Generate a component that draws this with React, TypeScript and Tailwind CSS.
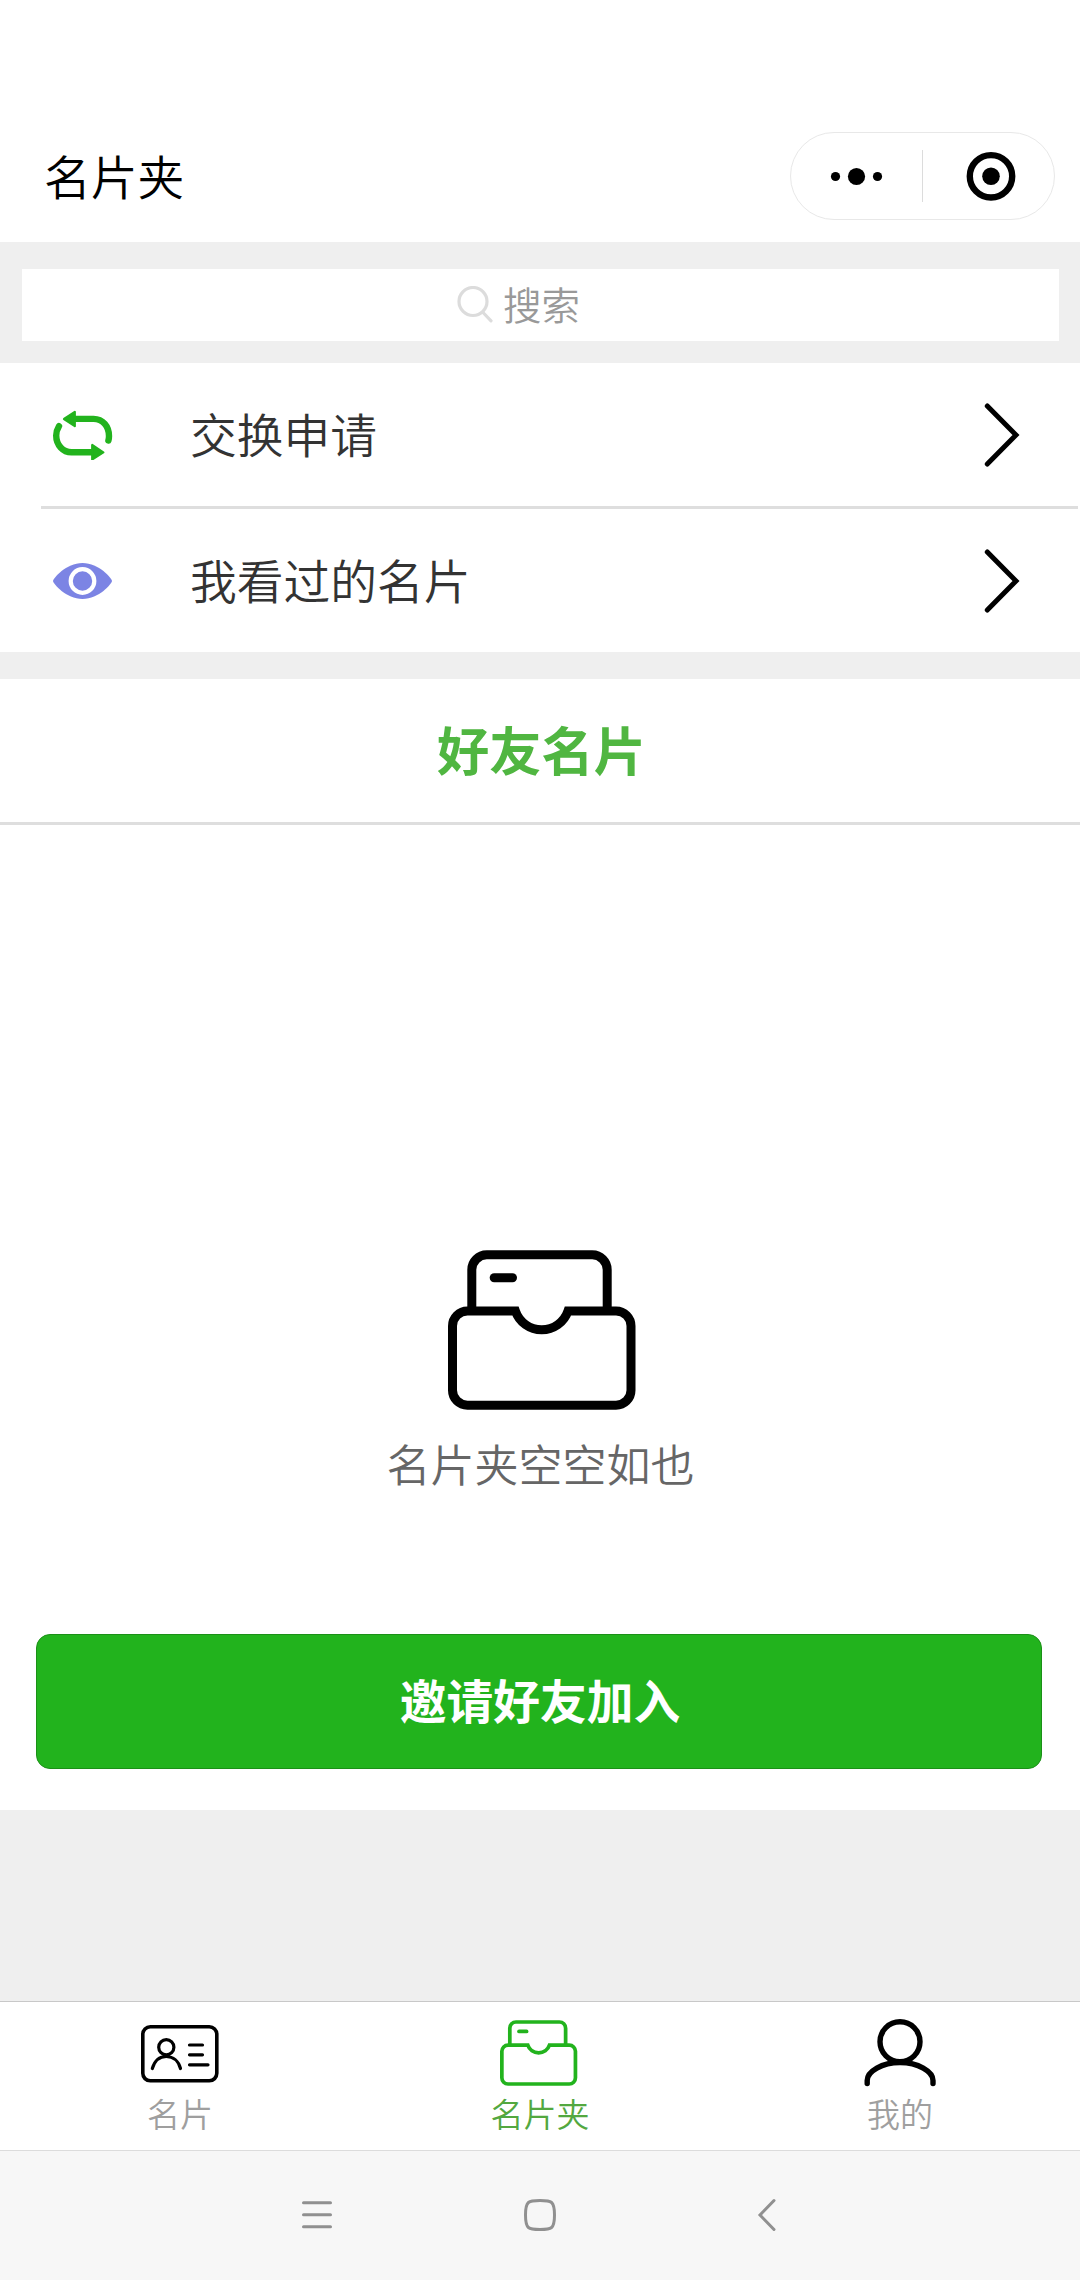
import type { ReactNode } from "react";

function FolderIcon({ className }: { className: string }) {
  return (
    <svg className={className} viewBox="0 0 188 160" fill="none" stroke="currentColor" strokeWidth="9">
      <path d="M23.8 61V19.8a15 15 0 0 1 15-15h105.4a15 15 0 0 1 15 15V61" />
      <path d="M67.4 61H19.5a15 15 0 0 0-15 15v64.2a15 15 0 0 0 15 15H168a15 15 0 0 0 15-15V76a15 15 0 0 0-15-15h-48a27.8 27.8 0 0 1-52.6 0Z" />
      <path d="M46.2 27.7h18.3" strokeLinecap="round" />
    </svg>
  );
}

function SwapIcon() {
  return (
    <svg className="h-[50px] w-[60px]" viewBox="0 0 60 50" fill="none" stroke="#22b31d" strokeWidth="6.4" strokeLinecap="round">
      <path d="M21 8.9H40.5C50 8.9 56 16.5 56 26c0 2-.2 3.200-.6 4.500" />
      <path d="M6 16.200C4.300 19 3.200 22 3.200 25.500C3.200 35 10 42.300 18.500 42.300H39" />
      <path d="M11 9L21.800 1.800V16.200Z" fill="#22b31d" strokeWidth="2.200" strokeLinejoin="round" />
      <path d="M50.300 42.300L39.200 35V49.500Z" fill="#22b31d" strokeWidth="2.200" strokeLinejoin="round" />
    </svg>
  );
}

function EyeIcon() {
  return (
    <svg className="h-[36px] w-[60px]" viewBox="0 0 60 36">
      <path d="M0 18C0 15.500 13 0 29.500 0S59 15.500 59 18S46 36 29.500 36S0 20.500 0 18Z" fill="#7c84e4" />
      <circle cx="29.500" cy="18" r="11.800" fill="none" stroke="#fff" strokeWidth="4.200" />
    </svg>
  );
}

function Row({ icon, label }: { icon: ReactNode; label: string }) {
  return (
    <div className="flex h-[143px] items-center pl-[53px] pr-[60px]">
      <div className="w-[137px]">{icon}</div>
      <span className="flex-1 pb-[4px] text-[46.750px] leading-[60px] text-[#333]">{label}</span>
      <svg className="h-[66px] w-[36px]" viewBox="0 0 36 66" fill="none" stroke="#000" strokeWidth="5" strokeLinecap="round">
        <path d="M3.300 4L32 33L3.300 62" />
      </svg>
    </div>
  );
}

function Tab({ icon, label, color }: { icon: ReactNode; label: string; color: string }) {
  return (
    <div className="flex flex-1 flex-col items-center pt-[15px]">
      <div className="flex h-[72px] items-center">{icon}</div>
      <span className={`mt-[2px] text-[33px] leading-[44px] ${color}`}>{label}</span>
    </div>
  );
}

export default function App() {
  return (
    <div className="flex h-[2280px] w-[1080px] flex-col bg-[#efefef] font-['Noto_Sans_CJK_SC',sans-serif] font-[350]">
      <header className="flex h-[242px] items-end justify-between bg-white pb-[22px] pl-[44px] pr-[25px]">
        <h1 className="mb-[15px] text-[46.750px] leading-[60px] text-black">名片夹</h1>
        <div className="flex h-[88px] w-[265px] items-center rounded-full border border-[#e8e8e8]">
          <svg className="h-[20px] w-[131px]" viewBox="0 0 131 20">
            <circle cx="44.500" cy="10.500" r="4.600" />
            <circle cx="65.500" cy="10.500" r="8.600" />
            <circle cx="86.500" cy="10.500" r="4.600" />
          </svg>
          <div className="h-[52px] w-px bg-[#dcdcdc]" />
          <svg className="h-[50px] w-[131px]" viewBox="0 0 131 50">
            <circle cx="68" cy="25.300" r="21.200" fill="none" stroke="#000" strokeWidth="6.400" />
            <circle cx="68" cy="25.300" r="8.800" />
          </svg>
        </div>
      </header>

      <div className="h-[121px] pl-[22px] pr-[21px] pt-[27px]">
        <div className="flex h-[72px] items-center justify-center bg-white pr-[44px]">
          <svg className="mr-[10px] h-[38px] w-[36px]" viewBox="0 0 36 38" fill="none" stroke="#dcdcdc" strokeWidth="3.200" strokeLinecap="round">
            <circle cx="16" cy="15.500" r="14" />
            <path d="M26 26.500L34 34.800" />
          </svg>
          <span className="pb-[4px] text-[38.500px] leading-[50px] text-[#999]">搜索</span>
        </div>
      </div>

      <section className="bg-white">
        <Row icon={<SwapIcon />} label="交换申请" />
        <div className="ml-[41px] mr-[2px] h-[3px] bg-[#dedede]" />
        <Row icon={<EyeIcon />} label="我看过的名片" />
      </section>

      <section className="mt-[27px] flex h-[1131px] flex-col bg-white">
        <h2 className="flex h-[146px] items-center justify-center border-b-[3px] border-[#dedede] pb-[5px] pl-[3px] text-[52.250px] font-bold leading-[70px] text-[#50b641]">
          好友名片
        </h2>
        <div className="flex flex-1 flex-col items-center pt-[425px]">
          <FolderIcon className="ml-[4px] h-[160px] w-[188px] text-black" />
          <p className="mt-[23px] pl-[1px] text-[44px] leading-[60px] text-[#666]">名片夹空空如也</p>
        </div>
        <button className="mb-[41px] ml-[36px] flex h-[135px] w-[1006px] items-center justify-center rounded-[14px] border border-[#1b9017] bg-[#22b31d] pb-[4px] pl-[2px] text-[46.750px] font-bold text-white">
          邀请好友加入
        </button>
      </section>

      <nav className="mt-auto flex h-[149px] shrink-0 border-t border-[#c8c8c8] bg-white">
        <Tab
          label="名片"
          color="text-[#9f9f9f]"
          icon={
            <svg className="mt-[2px] h-[58px] w-[78px]" viewBox="0 0 78 58" fill="none" stroke="#000" strokeWidth="3.200" strokeLinecap="round">
              <rect x="1.800" y="1.800" width="74" height="54" rx="7.500" strokeWidth="3.600" />
              <circle cx="25.300" cy="22.200" r="7.600" />
              <path d="M11.300 43.500C13.500 36 18.500 31.500 25.300 31.500S37.500 36 39.500 43.500M48.500 20H61.500M48.500 29.800H61.500M48.500 39.800H67" />
            </svg>
          }
        />
        <Tab label="名片夹" color="text-[#53a840]" icon={<FolderIcon className="-ml-[2px] h-[66px] w-[77.500px] text-[#22b31d]" />} />
        <Tab
          label="我的"
          color="text-[#9f9f9f]"
          icon={
            <svg className="h-[68px] w-[72px]" viewBox="0 0 72 68" fill="none" stroke="#000" strokeWidth="5.400" strokeLinecap="round">
              <circle cx="36" cy="22.800" r="20" />
              <path d="M3.200 64.500V61.500C3.200 52.500 18 43.500 36 43.500S69 52.500 69 61.500V64.500" />
            </svg>
          }
        />
      </nav>

      <footer className="flex h-[130px] shrink-0 items-center border-t border-[#dcdcdc] bg-[#f7f7f7] pb-[2px]">
        <svg className="ml-[301px] h-[34px] w-[32px]" viewBox="0 0 32 34" fill="none" stroke="#909090" strokeWidth="3" strokeLinecap="round">
          <path d="M2.500 4.700H29.500M2.500 16.700H29.500M2.500 28.700H29.500" />
        </svg>
        <svg className="ml-[190px] h-[34px] w-[34px]" viewBox="0 0 34 34" fill="none" stroke="#909090" strokeWidth="3">
          <path d="M17 2.500C28.500 2.500 31.500 3 31.500 17S28.500 31.500 17 31.500S2.500 31 2.500 17S5.500 2.500 17 2.500Z" />
        </svg>
        <svg className="ml-[200px] h-[34px] w-[20px]" viewBox="0 0 20 34" fill="none" stroke="#909090" strokeWidth="3" strokeLinecap="round">
          <path d="M17 2.500L3 17L17 31.500" />
        </svg>
      </footer>
    </div>
  );
}
